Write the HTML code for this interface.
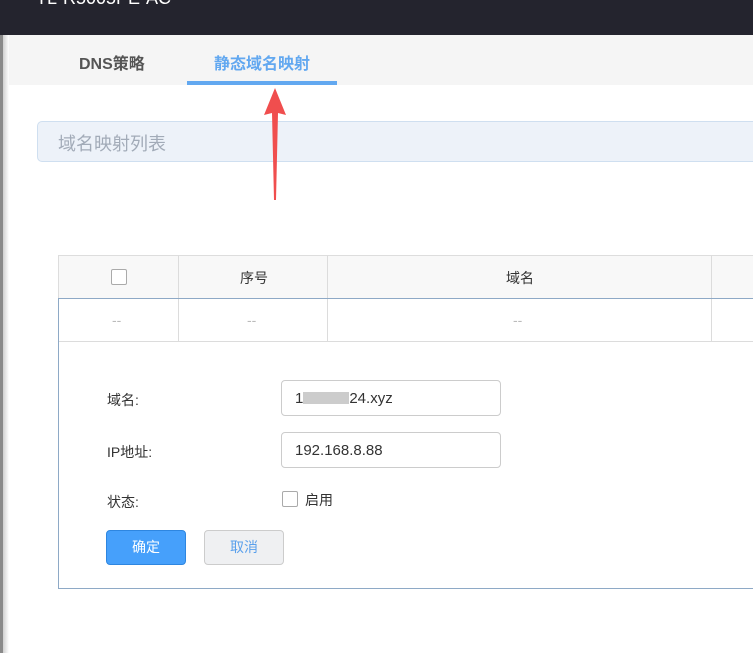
<!DOCTYPE html>
<html><head><meta charset="utf-8"><style>
*{margin:0;padding:0;box-sizing:border-box}
body{width:753px;height:653px;overflow:hidden;background:#fff;font-family:"Liberation Sans","Noto Sans CJK SC",sans-serif;position:relative}
.top{position:absolute;left:0;top:0;width:753px;height:35px;background:#24242e}
.top span{position:absolute;left:36px;top:-12px;color:#fff;font-size:18px}
.side{position:absolute;left:0;top:35px;width:3px;height:618px;background:#8a8a8a}
.side2{position:absolute;left:3px;top:35px;width:6px;height:618px;background:linear-gradient(90deg,#d0d0d0,#fff)}
.tabs{position:absolute;left:3px;top:35px;width:750px;height:50px;background:#f5f5f5}
.tab{position:absolute;top:15px;font-size:16px;font-weight:bold}
.bar{position:absolute;left:187px;top:81px;width:150px;height:4px;background:#62a8f0}
.title{position:absolute;left:37px;top:121px;width:730px;height:41px;background:#edf2f9;border:1px solid #cfdff0;border-radius:5px;color:#a2abb8;font-size:18px;padding:8px 0 0 20px}
.t{position:absolute;border-color:#dcdcdc;border-style:solid}
.lbl{position:absolute;font-size:14px;color:#333}
.inp{position:absolute;left:281px;width:220px;height:36px;border:1px solid #ccc;border-radius:4px;font-size:15px;color:#333;padding:9px 0 0 13px}
.cb{position:absolute;width:16px;height:16px;border:1px solid #aaa;border-radius:2px;background:#fff}
.btn{position:absolute;top:530px;width:80px;height:35px;border-radius:4px;font-size:14px;text-align:center;line-height:33px}
</style></head><body>
<div class="top"><span>TL-R5005PE-AC</span></div>
<div class="tabs">
<div class="tab" style="left:76px;color:#555">DNS策略</div>
<div class="tab" style="left:211px;color:#62a8f0">静态域名映射</div>
</div>
<div class="bar"></div>
<div class="side"></div><div class="side2"></div>
<div class="title">域名映射列表</div>
<svg style="position:absolute;left:262px;top:86px" width="24" height="116"><polygon points="13,2 2,29 10,27 12,114 14,114 16,27 24,29" fill="#f04e4e"/></svg>
<div style="position:absolute;left:58px;top:255px;width:700px;height:43px;background:#f8f8f8;border:1px solid #ddd;border-bottom:none"></div>
<div class="t" style="left:178px;top:255px;height:86px;border-width:0 0 0 1px"></div>
<div class="t" style="left:327px;top:255px;height:86px;border-width:0 0 0 1px"></div>
<div class="t" style="left:711px;top:255px;height:86px;border-width:0 0 0 1px"></div>
<div class="t" style="left:58px;top:341px;width:700px;border-width:1px 0 0 0"></div>
<div style="position:absolute;left:58px;top:298px;width:700px;height:291px;border:1px solid #8ea9c6;border-right:none"></div>
<div class="cb" style="left:111px;top:269px"></div>
<div class="lbl" style="left:240px;top:268px">序号</div>
<div class="lbl" style="left:506px;top:268px">域名</div>
<div class="lbl" style="left:112px;top:312px;color:#bbb">--</div>
<div class="lbl" style="left:247px;top:312px;color:#bbb">--</div>
<div class="lbl" style="left:513px;top:312px;color:#bbb">--</div>
<div class="lbl" style="left:107px;top:390px">域名:</div>
<div class="lbl" style="left:107px;top:442px">IP地址:</div>
<div class="lbl" style="left:107px;top:492px">状态:</div>
<div class="inp" style="top:380px">1<span style="display:inline-block;width:46px;height:12px;background:#ccc;vertical-align:-1px"></span>24.xyz</div>
<div class="inp" style="top:432px">192.168.8.88</div>
<div class="cb" style="left:282px;top:491px"></div>
<div class="lbl" style="left:305px;top:490px">启用</div>
<div class="btn" style="left:106px;background:#46a0fb;border:1px solid #2e86e0;color:#fff">确定</div>
<div class="btn" style="left:204px;background:#eff0f2;border:1px solid #ccc;color:#5aa0ec">取消</div>
</body></html>
